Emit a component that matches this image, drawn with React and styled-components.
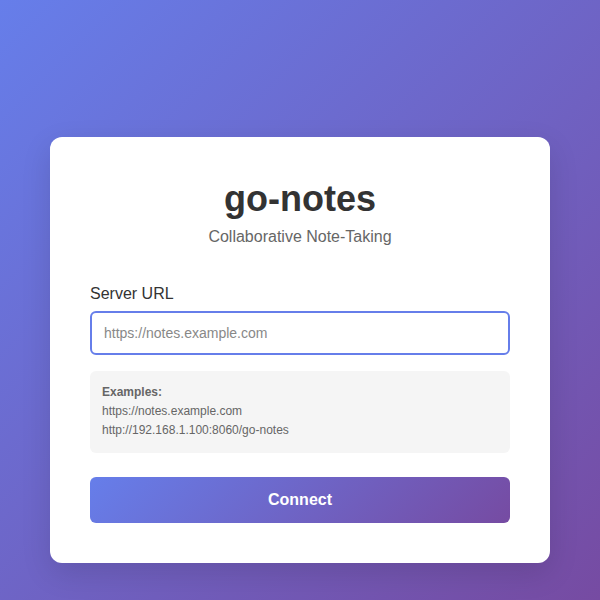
import styled, { createGlobalStyle } from 'styled-components';

const GlobalStyle = createGlobalStyle`
  * {
    box-sizing: border-box;
  }
  body {
    margin: 0;
    font-family: 'Liberation Sans', Arial, sans-serif;
  }
`;

const Page = styled.div`
  min-height: 100vh;
  padding: 137px 50px 37px;
  background: linear-gradient(135deg, #667eea 0%, #764ba2 100%);
`;

const Card = styled.div`
  background: #fff;
  border-radius: 12px;
  padding: 40px;
  box-shadow: 0 10px 30px rgba(0, 0, 0, 0.12);
`;

const Title = styled.h1`
  margin: 1px 0 8px;
  font-size: 36px;
  font-weight: 700;
  color: #333;
  text-align: center;
`;

const Subtitle = styled.p`
  margin: 0 0 39px;
  font-size: 16px;
  color: #666;
  text-align: center;
`;

const Label = styled.label`
  display: block;
  margin-bottom: 8px;
  font-size: 16px;
  color: #333;
`;

const Input = styled.input`
  display: block;
  width: 100%;
  padding: 12px;
  border: 2px solid #ddd;
  border-radius: 6px;
  font-family: inherit;
  font-size: 14px;
  color: #333;
  outline: none;

  &:focus {
    border-color: #667eea;
  }

  &::placeholder {
    color: #888;
  }
`;

const Examples = styled.div`
  margin: 16px 0 24px;
  padding: 12px;
  background: #f5f5f5;
  border-radius: 6px;
  font-size: 12px;
  line-height: 1.6;
  color: #666;

  strong {
    display: block;
  }
`;

const Button = styled.button`
  display: block;
  width: 100%;
  padding: 14px;
  border: none;
  border-radius: 6px;
  background: linear-gradient(135deg, #667eea 0%, #764ba2 100%);
  color: #fff;
  font-family: inherit;
  font-size: 16px;
  font-weight: 700;
  cursor: pointer;
`;

const App = () => {
  return (
    <Page>
      <GlobalStyle />
      <Card>
        <Title>go-notes</Title>
        <Subtitle>Collaborative Note-Taking</Subtitle>
        <Label htmlFor='server-url'>Server URL</Label>
        <Input
          id='server-url'
          type='text'
          placeholder='https://notes.example.com'
          autoFocus
        />
        <Examples>
          <strong>Examples:</strong>
          <div>https://notes.example.com</div>
          <div>http://192.168.1.100:8060/go-notes</div>
        </Examples>
        <Button>Connect</Button>
      </Card>
    </Page>
  );
};

export default App;
